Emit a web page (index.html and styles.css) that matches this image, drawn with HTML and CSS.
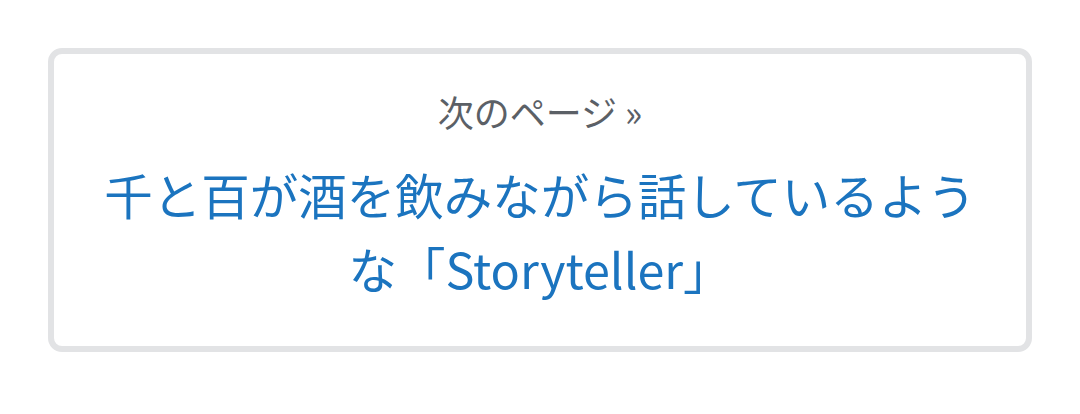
FILE: index.html
```html
<!DOCTYPE html>
<html lang="ja">
<head>
  <meta charset="UTF-8">
  <meta name="viewport" content="width=device-width, initial-scale=1.0">
  <title>次のページ</title>
  <link rel="stylesheet" href="styles.css">
</head>
<body>

  <a class="next-card" href="#">
    <div class="next-label">次のページ »</div>
    <div class="next-title">千と百が酒を飲みながら話しているような「Storyteller」</div>
  </a>

</body>
</html>
```

FILE: styles.css
```css
* {
  margin: 0;
  padding: 0;
  box-sizing: border-box;
}

body {
  padding: 48px;
  background: #ffffff;
  font-family: "Noto Sans CJK JP", "Noto Sans", sans-serif;
}

.next-card {
  display: block;
  border: 6px solid #e2e3e5;
  border-radius: 14px;
  padding: 32px 40px 41px;
  text-align: center;
  text-decoration: none;
}

.next-label {
  font-size: 36px;
  line-height: 51px;
  color: #5b6066;
}

.next-title {
  margin-top: 20px;
  font-size: 48.5px;
  line-height: 74px;
  color: #1b74bf;
}
```
